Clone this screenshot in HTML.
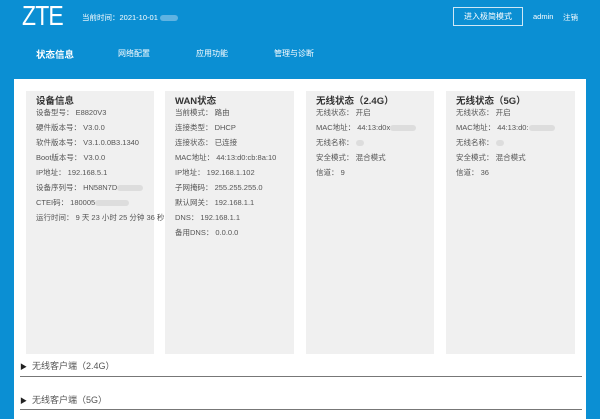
<!DOCTYPE html>
<html><head><meta charset="utf-8"><style>
body{margin:0;width:600px;height:419px;overflow:hidden;background:#0b8fd3;font-family:"Liberation Sans","Noto Sans CJK SC",sans-serif;position:relative}
.a{position:absolute;white-space:nowrap}
.logo{left:22px;top:0px;font-size:28px;color:#fff;letter-spacing:-1px;transform:scaleX(0.82);transform-origin:left}
.w{color:#fff}
.panel{left:14px;top:79px;width:572px;height:340px;background:#fff}
.card{position:absolute;top:12px;width:128px;height:263px;background:#f0f0f0}
.card .t{position:absolute;left:10px;top:2px;font-size:9.5px;font-weight:bold;color:#333}
.card .l{position:absolute;left:10px;font-size:7.5px;color:#555}
.blur{display:inline-block;width:26px;height:6px;background:#ddd;border-radius:3px;vertical-align:middle}
.row{position:absolute;left:6px;width:562px;border-bottom:1px solid #777;font-size:9px;color:#555}
</style></head><body>
<div class="a logo">ZTE</div>
<div class="a w" style="left:82px;top:12px;font-size:7.5px">当前时间：2021-10-01 <span class="blur" style="background:#5fb3e2;width:18px"></span></div>
<div class="a" style="left:453px;top:7px;width:68px;height:17px;border:1px solid #cfe8f6;color:#fff;font-size:8px;text-align:center;line-height:17px">进入极简模式</div>
<div class="a w" style="left:533px;top:12px;font-size:7.5px">admin</div>
<div class="a w" style="left:563px;top:12px;font-size:7.5px">注销</div>
<div class="a w" style="left:36px;top:47px;font-size:9.5px;font-weight:bold">状态信息</div>
<div class="a w" style="left:118px;top:48px;font-size:8px">网络配置</div>
<div class="a w" style="left:196px;top:48px;font-size:8px">应用功能</div>
<div class="a w" style="left:274px;top:48px;font-size:8px">管理与诊断</div>
<div class="a panel">
<div class="card" style="left:12px"><div class="t">设备信息</div>
<div class="l" style="top:16px">设备型号： E8820V3</div>
<div class="l" style="top:31px">硬件版本号： V3.0.0</div>
<div class="l" style="top:46px">软件版本号： V3.1.0.0B3.1340</div>
<div class="l" style="top:61px">Boot版本号： V3.0.0</div>
<div class="l" style="top:76px">IP地址： 192.168.5.1</div>
<div class="l" style="top:91px">设备序列号： HN58N7D<span class="blur"></span></div>
<div class="l" style="top:106px">CTEI码： 180005<span class="blur" style="width:34px"></span></div>
<div class="l" style="top:121px">运行时间： 9 天 23 小时 25 分钟 36 秒</div></div>
<div class="card" style="left:151px;width:129px"><div class="t">WAN状态</div>
<div class="l" style="top:16px">当前模式： 路由</div>
<div class="l" style="top:31px">连接类型： DHCP</div>
<div class="l" style="top:46px">连接状态： 已连接</div>
<div class="l" style="top:61px">MAC地址： 44:13:d0:cb:8a:10</div>
<div class="l" style="top:76px">IP地址： 192.168.1.102</div>
<div class="l" style="top:91px">子网掩码： 255.255.255.0</div>
<div class="l" style="top:106px">默认网关： 192.168.1.1</div>
<div class="l" style="top:121px">DNS： 192.168.1.1</div>
<div class="l" style="top:136px">备用DNS： 0.0.0.0</div></div>
<div class="card" style="left:292px"><div class="t">无线状态（2.4G）</div>
<div class="l" style="top:16px">无线状态： 开启</div>
<div class="l" style="top:31px">MAC地址： 44:13:d0x<span class="blur"></span></div>
<div class="l" style="top:46px">无线名称： <span class="blur" style="width:8px"></span></div>
<div class="l" style="top:61px">安全模式： 混合模式</div>
<div class="l" style="top:76px">信道： 9</div></div>
<div class="card" style="left:432px;width:129px"><div class="t">无线状态（5G）</div>
<div class="l" style="top:16px">无线状态： 开启</div>
<div class="l" style="top:31px">MAC地址： 44:13:d0:<span class="blur"></span></div>
<div class="l" style="top:46px">无线名称： <span class="blur" style="width:8px"></span></div>
<div class="l" style="top:61px">安全模式： 混合模式</div>
<div class="l" style="top:76px">信道： 36</div></div>
<div class="row" style="top:280px;height:17px"><span style="font-size:7px;color:#222">▶</span>&nbsp;&nbsp;无线客户端（2.4G）</div>
<div class="row" style="top:314px;height:16px"><span style="font-size:7px;color:#222">▶</span>&nbsp;&nbsp;无线客户端（5G）</div>
</div>
</body></html>
